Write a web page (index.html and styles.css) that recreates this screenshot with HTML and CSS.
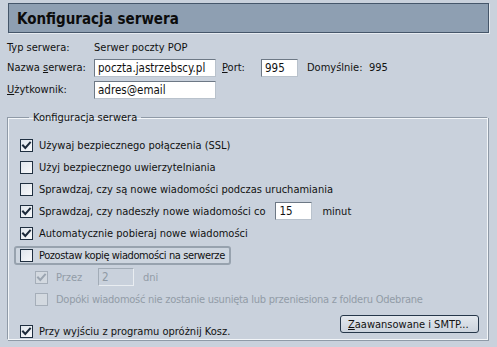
FILE: index.html
```html
<!DOCTYPE html>
<html lang="pl">
<head>
<meta charset="utf-8">
<title>Konfiguracja serwera</title>
<link rel="stylesheet" href="styles.css">
</head>
<body>
<div class="page">
  <div class="header"><h1 class="title">Konfiguracja serwera</h1></div>

  <div class="info">
    <div class="row row-type">
      <span class="lbl">Typ serwera:</span>
      <span class="val">Serwer poczty POP</span>
    </div>
    <div class="row">
      <span class="lbl">Nazwa <u>s</u>erwera:</span>
      <span class="input input-wide">poczta.jastrzebscy.pl</span>
      <span class="lbl-port"><u>P</u>ort:</span>
      <span class="input input-port">995</span>
      <span class="lbl-def">Domyślnie:</span>
      <span class="val">995</span>
    </div>
    <div class="row">
      <span class="lbl"><u>U</u>żytkownik:</span>
      <span class="input input-wide">adres@email</span>
    </div>
  </div>

  <fieldset class="group">
    <legend class="legend">Konfiguracja serwera</legend>

    <div class="opt"><span class="cb on"><svg viewBox="0 0 11 11"><path d="M2 5.5 L4.3 8 L9 2.6"/></svg></span><span>Używaj bezpiecznego połączenia (SSL)</span></div>
    <div class="opt"><span class="cb"></span><span>Użyj bezpiecznego uwierzytelniania</span></div>
    <div class="opt"><span class="cb"></span><span>Sprawdzaj, czy są nowe wiadomości podczas uruchamiania</span></div>
    <div class="opt"><span class="cb on"><svg viewBox="0 0 11 11"><path d="M2 5.5 L4.3 8 L9 2.6"/></svg></span><span>Sprawdzaj, czy nadeszły nowe wiadomości co</span><span class="input input-min">15</span><span class="after">minut</span></div>
    <div class="opt"><span class="cb on"><svg viewBox="0 0 11 11"><path d="M2 5.5 L4.3 8 L9 2.6"/></svg></span><span>Automatycznie pobieraj nowe wiadomości</span></div>
    <div class="opt"><span class="focus"><span class="cb"></span><span class="tight">Pozostaw kopię wiadomości na serwerze</span></span></div>
    <div class="opt sub dis"><span class="cb on"><svg viewBox="0 0 11 11"><path d="M2 5.5 L4.3 8 L9 2.6"/></svg></span><span class="lbl-przez">Przez</span><span class="input input-days">2</span><span class="after-dni">dni</span></div>
    <div class="opt sub dis"><span class="cb"></span><span class="tight-dis">Dopóki wiadomość nie zostanie usunięta lub przeniesiona z folderu Odebrane</span></div>
    <div class="opt last"><span class="cb on"><svg viewBox="0 0 11 11"><path d="M2 5.5 L4.3 8 L9 2.6"/></svg></span><span class="grow">Przy wyjściu z programu opróżnij Kosz.</span><span class="btn"><u>Z</u>aawansowane i SMTP...</span></div>
  </fieldset>
</div>
</body>
</html>
```

FILE: styles.css
```css
* { box-sizing: border-box; }

html, body {
  margin: 0;
  padding: 0;
  background: #c9d1dc;
}

body {
  width: 497px;
  height: 347px;
  overflow: hidden;
  font-family: "DejaVu Sans Condensed", "DejaVu Sans", sans-serif;
  font-stretch: condensed;
  font-size: 11px;
  color: #111;
}

u { text-decoration: underline; text-underline-offset: 1px; }

.page {
  padding-top: 3px;
}

.header {
  margin: 0 8px;
  height: 30px;
  background: #8e9fb2;
  border: 1px solid #45566a;
  box-shadow: 1px 1px 0 #e6ebf1;
  display: flex;
  align-items: center;
  padding-left: 8px;
}

.title {
  margin: 0;
  font-size: 15px;
  font-weight: bold;
  color: #0c0c0c;
  padding-top: 1px;
}

.info {
  padding: 7px 0 0 7px;
  display: flex;
  flex-direction: column;
  gap: 3px;
}

.row {
  display: flex;
  align-items: center;
  height: 19px;
}

.row-type { height: 15px; }

.lbl { width: 87px; }

.val { white-space: nowrap; }

.input {
  display: inline-flex;
  align-items: center;
  height: 18px;
  background: #fff;
  border: 1px solid;
  border-color: #6d7885 #b9c2cc #b9c2cc #6d7885;
  padding-left: 3px;
  white-space: nowrap;
  overflow: hidden;
  font-size: 11.5px;
}

.input-wide { width: 122px; }
.lbl-port { margin-left: 6px; width: 39px; }
.input-port { width: 37px; }
.lbl-def { margin-left: 9px; width: 62px; }

.group {
  margin: 12px 9px 0 7px;
  padding: 10px 0 0 12px;
  height: 229px;
  border: 1px solid;
  border-color: #8f9aa7 #f3f6f9 #f3f6f9 #8f9aa7;
  box-shadow: inset 1px 1px 0 #f3f6f9, 1px 1px 0 #8f9aa7;
}

.legend {
  margin-left: 9px;
  padding: 0 4px;
}

.opt {
  display: flex;
  align-items: center;
  height: 22px;
  white-space: nowrap;
}

.cb {
  width: 13px;
  height: 13px;
  flex: none;
  border: 1px solid #1f2f40;
  background: linear-gradient(135deg, #dfe5ec, #f8f9fb);
  margin-right: 6px;
  display: inline-flex;
  align-items: center;
  justify-content: center;
}

.cb svg { width: 11px; height: 11px; }
.cb path {
  fill: none;
  stroke: #1c2a3a;
  stroke-width: 2;
  stroke-linecap: square;
}

.input-min { width: 37px; margin-left: 10px; }
.after { margin-left: 10px; }

.focus {
  display: inline-flex;
  align-items: center;
  width: 217px;
  height: 19px;
  margin-left: -6px;
  padding: 0 4px;
  border: 2px solid #97a2ae;
  border-radius: 3px;
  background: #cdd5df;
}

.tight { letter-spacing: -0.4px; }
.tight-dis { letter-spacing: -0.25px; }

.sub { padding-left: 15px; height: 22px; }
.sub:first-of-type { margin-top: 1px; }

.dis { color: #929ca7; }
.dis .cb {
  border-color: #a5aeb9;
  background: #d3d9e0;
  margin-right: 8px;
}
.dis .cb path { stroke: #9ba5b1; }
.dis .input {
  background: transparent;
  border-color: #a2acb7 #e9edf1 #e9edf1 #a2acb7;
  color: #8f99a4;
}

.lbl-przez { width: 42px; }
.input-days { width: 36px; }
.after-dni { margin-left: 9px; }

.last {
  margin-top: 9px;
  height: 24px;
}

.grow { flex: 1; }

.btn {
  align-self: flex-start;
  margin-top: -4px;
  width: 139px;
  height: 18px;
  margin-right: 8px;
  border: 1px solid #26374a;
  border-radius: 3px;
  background: linear-gradient(#e3e8ee, #cbd3dd);
  display: inline-flex;
  align-items: center;
  padding-left: 7px;
  color: #111;
}
```
